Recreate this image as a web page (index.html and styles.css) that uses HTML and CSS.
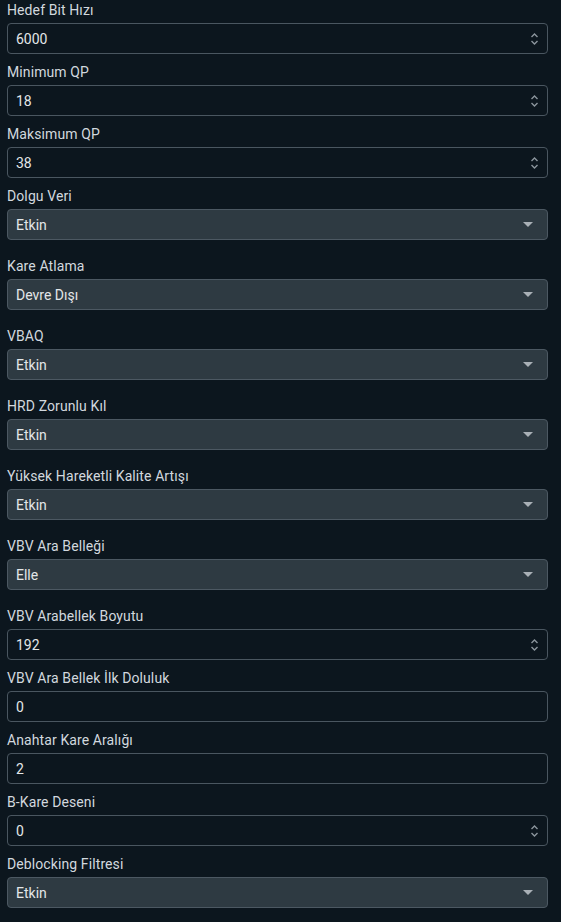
FILE: index.html
```html
<!DOCTYPE html>
<html lang="tr">
<head>
<meta charset="utf-8">
<link rel="stylesheet" href="styles.css">
</head>
<body>
<div class="form">
  <div class="field num"><div class="label">Hedef Bit Hızı</div><div class="box"><span>6000</span><span class="spin"><svg width="9" height="14" viewBox="0 0 9 14"><path d="M1.5 5 L4.5 2 L7.5 5 M1.5 9 L4.5 12 L7.5 9" fill="none" stroke="#8b959d" stroke-width="1.4"/></svg></span></div></div>
  <div class="field num"><div class="label">Minimum QP</div><div class="box"><span>18</span><span class="spin"><svg width="9" height="14" viewBox="0 0 9 14"><path d="M1.5 5 L4.5 2 L7.5 5 M1.5 9 L4.5 12 L7.5 9" fill="none" stroke="#8b959d" stroke-width="1.4"/></svg></span></div></div>
  <div class="field num"><div class="label">Maksimum QP</div><div class="box"><span>38</span><span class="spin"><svg width="9" height="14" viewBox="0 0 9 14"><path d="M1.5 5 L4.5 2 L7.5 5 M1.5 9 L4.5 12 L7.5 9" fill="none" stroke="#8b959d" stroke-width="1.4"/></svg></span></div></div>
  <div class="field sel"><div class="label">Dolgu Veri</div><div class="box"><span>Etkin</span><span class="caret"></span></div></div>
  <div class="field sel"><div class="label">Kare Atlama</div><div class="box"><span>Devre Dışı</span><span class="caret"></span></div></div>
  <div class="field sel"><div class="label">VBAQ</div><div class="box"><span>Etkin</span><span class="caret"></span></div></div>
  <div class="field sel"><div class="label">HRD Zorunlu Kıl</div><div class="box"><span>Etkin</span><span class="caret"></span></div></div>
  <div class="field sel"><div class="label">Yüksek Hareketli Kalite Artışı</div><div class="box"><span>Etkin</span><span class="caret"></span></div></div>
  <div class="field sel"><div class="label">VBV Ara Belleği</div><div class="box"><span>Elle</span><span class="caret"></span></div></div>
  <div class="field num"><div class="label">VBV Arabellek Boyutu</div><div class="box"><span>192</span><span class="spin"><svg width="9" height="14" viewBox="0 0 9 14"><path d="M1.5 5 L4.5 2 L7.5 5 M1.5 9 L4.5 12 L7.5 9" fill="none" stroke="#8b959d" stroke-width="1.4"/></svg></span></div></div>
  <div class="field num"><div class="label">VBV Ara Bellek İlk Doluluk</div><div class="box"><span>0</span></div></div>
  <div class="field num"><div class="label">Anahtar Kare Aralığı</div><div class="box"><span>2</span></div></div>
  <div class="field num"><div class="label">B-Kare Deseni</div><div class="box"><span>0</span><span class="spin"><svg width="9" height="14" viewBox="0 0 9 14"><path d="M1.5 5 L4.5 2 L7.5 5 M1.5 9 L4.5 12 L7.5 9" fill="none" stroke="#8b959d" stroke-width="1.4"/></svg></span></div></div>
  <div class="field sel"><div class="label">Deblocking Filtresi</div><div class="box"><span>Etkin</span><span class="caret"></span></div></div>
</div>
</body>
</html>
```
FILE: styles.css
```css
html, body {
  margin: 0;
  padding: 0;
  background: #0c161e;
}
body {
  font-family: Roboto, "Liberation Sans", sans-serif;
  font-size: 14px;
  color: #e3e6e8;
}
.form {
  padding: 0 13px 0 7px;
  display: flex;
  flex-direction: column;
}
.field {
  display: flex;
  flex-direction: column;
  margin-bottom: 8px;
}
.field.sel {
  margin-bottom: 16px;
}
.field.sel:last-child {
  margin-bottom: 8px;
}
.label {
  box-sizing: border-box;
  height: 19px;
  padding-top: 2px;
  line-height: 17px;
  margin-bottom: 4px;
  color: #d2d8de;
  font-weight: 400;
  letter-spacing: 0.1px;
}
.box {
  box-sizing: border-box;
  height: 31px;
  border: 1px solid #4a5660;
  border-radius: 4px;
  padding: 0 8px 0 8px;
  display: flex;
  align-items: center;
  justify-content: space-between;
}
.num .box {
  background: #0c161e;
}
.sel .box {
  background: #2e3a42;
  border-color: #4c5862;
  padding-right: 14px;
}
.spin {
  display: flex;
  align-items: center;
}
.spin svg {
  display: block;
}
.caret {
  width: 0;
  height: 0;
  border-left: 5px solid transparent;
  border-right: 5px solid transparent;
  border-top: 5px solid #a9b0b6;
}
```
